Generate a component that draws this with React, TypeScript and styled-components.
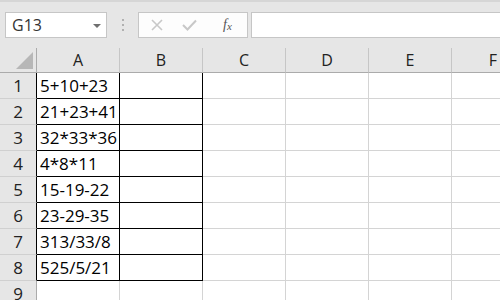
import styled, { createGlobalStyle } from 'styled-components';

const GlobalStyle = createGlobalStyle`
  html,
  body {
    margin: 0;
    padding: 0;
    background: #ffffff;
    overflow: hidden;
  }

  body {
    font-family: 'Open Sans', 'Liberation Sans', sans-serif;
  }
`;

const COLUMNS = ['A', 'B', 'C', 'D', 'E', 'F'];
const ROW_COUNT = 9;
const DATA = [
  '5+10+23',
  '21+23+41',
  '32*33*36',
  '4*8*11',
  '15-19-22',
  '23-29-35',
  '313/33/8',
  '525/5/21',
];

const Page = styled.div`
  width: 500px;
  height: 300px;
  overflow: hidden;
  background: #e6e6e6;
`;

const Toolbar = styled.div`
  height: 48px;
  box-sizing: border-box;
  border-top: 2px solid #d6d6d6;
  padding: 10px 0 0 5px;
  display: flex;
  align-items: flex-start;
`;

const NameBox = styled.div`
  width: 102px;
  height: 26px;
  box-sizing: border-box;
  background: #ffffff;
  border: 1px solid #c6c6c6;
  display: flex;
  align-items: center;
  justify-content: space-between;
  padding: 0 5px 0 6px;
  font-family: 'Open Sans', sans-serif;
  font-size: 16px;
  color: #333333;
`;

const DropArrow = styled.span`
  width: 0;
  height: 0;
  border-left: 4px solid transparent;
  border-right: 4px solid transparent;
  border-top: 4px solid #6f6f6f;
  margin-top: 1px;
`;

const Grip = styled.div`
  width: 31px;
  height: 26px;
  display: flex;
  flex-direction: column;
  align-items: center;
  justify-content: center;
  gap: 3px;

  span {
    width: 2px;
    height: 2px;
    background: #b0b0b0;
  }
`;

const FxBox = styled.div`
  width: 110px;
  height: 26px;
  box-sizing: border-box;
  background: #fdfdfd;
  border: 1px solid #c6c6c6;
  display: flex;
  align-items: center;
  padding-left: 12px;
  gap: 19px;
`;

const FxLabel = styled.span`
  font-family: 'Liberation Serif', serif;
  font-style: italic;
  font-size: 14px;
  color: #555555;
  margin-left: 7px;

  sub {
    font-size: 11px;
    vertical-align: -1px;
  }
`;

const FormulaInput = styled.div`
  flex: 1;
  height: 26px;
  box-sizing: border-box;
  margin-left: 3px;
  background: #ffffff;
  border: 1px solid #c6c6c6;
  border-right: none;
`;

const Sheet = styled.div`
  display: grid;
  grid-template-columns: 37px repeat(6, 83px);
  grid-template-rows: 25px;
  grid-auto-rows: 26px;
  background: #ffffff;
`;

const Corner = styled.div`
  background: #e6e6e6;
  border-right: 1px solid #ababab;
  border-bottom: 1px solid #ababab;
  display: flex;
  align-items: flex-end;
  justify-content: flex-end;
  padding: 0 3px 3px 0;
`;

const ColHeader = styled.div`
  background: #e6e6e6;
  border-right: 1px solid #c6c6c6;
  border-bottom: 1px solid #ababab;
  font-size: 16px;
  line-height: 24px;
  text-align: center;
  color: #222222;
`;

const RowHeader = styled.div<{ $boxed?: boolean }>`
  background: #e6e6e6;
  border-right: 1px solid ${({ $boxed }) => ($boxed ? '#000000' : '#ababab')};
  border-bottom: 1px solid #d0d0d0;
  font-size: 17px;
  line-height: 25px;
  text-align: center;
  color: #222222;
`;

const Cell = styled.div<{ $boxed?: boolean }>`
  border-right: 1px solid ${({ $boxed }) => ($boxed ? '#000000' : '#d4d4d4')};
  border-bottom: 1px solid ${({ $boxed }) => ($boxed ? '#000000' : '#d4d4d4')};
  font-size: 17px;
  line-height: 25px;
  padding-left: 3px;
  white-space: nowrap;
  overflow: hidden;
  color: #000000;
`;

const CrossIcon = () => (
  <svg width="12" height="12" viewBox="0 0 12 12">
    <path d="M1 1 L11 11 M11 1 L1 11" stroke="#c8c8c8" strokeWidth="1.6" />
  </svg>
);

const CheckIcon = () => (
  <svg width="15" height="12" viewBox="0 0 15 12">
    <path d="M1 6 L5.5 10.5 L14 1.5" stroke="#c8c8c8" strokeWidth="2" fill="none" />
  </svg>
);

const CornerTriangle = () => (
  <svg width="17" height="17" viewBox="0 0 17 17">
    <polygon points="0,17 17,0 17,17" fill="#b7b7b7" />
  </svg>
);

export default function App() {
  const rows = Array.from({ length: ROW_COUNT }, (_, i) => i + 1);

  return (
    <Page>
      <GlobalStyle />
      <Toolbar>
        <NameBox>
          G13
          <DropArrow />
        </NameBox>
        <Grip>
          <span />
          <span />
          <span />
        </Grip>
        <FxBox>
          <CrossIcon />
          <CheckIcon />
          <FxLabel>
            f<sub>x</sub>
          </FxLabel>
        </FxBox>
        <FormulaInput />
      </Toolbar>
      <Sheet>
        <Corner>
          <CornerTriangle />
        </Corner>
        {COLUMNS.map((c) => (
          <ColHeader key={c}>{c}</ColHeader>
        ))}
        {rows.map((r) => {
          const boxed = r <= DATA.length;
          return [
            <RowHeader key={`h${r}`} $boxed={boxed}>
              {r}
            </RowHeader>,
            ...COLUMNS.map((c, ci) => (
              <Cell key={`${c}${r}`} $boxed={boxed && ci < 2}>
                {c === 'A' && boxed ? DATA[r - 1] : ''}
              </Cell>
            )),
          ];
        })}
      </Sheet>
    </Page>
  );
}
